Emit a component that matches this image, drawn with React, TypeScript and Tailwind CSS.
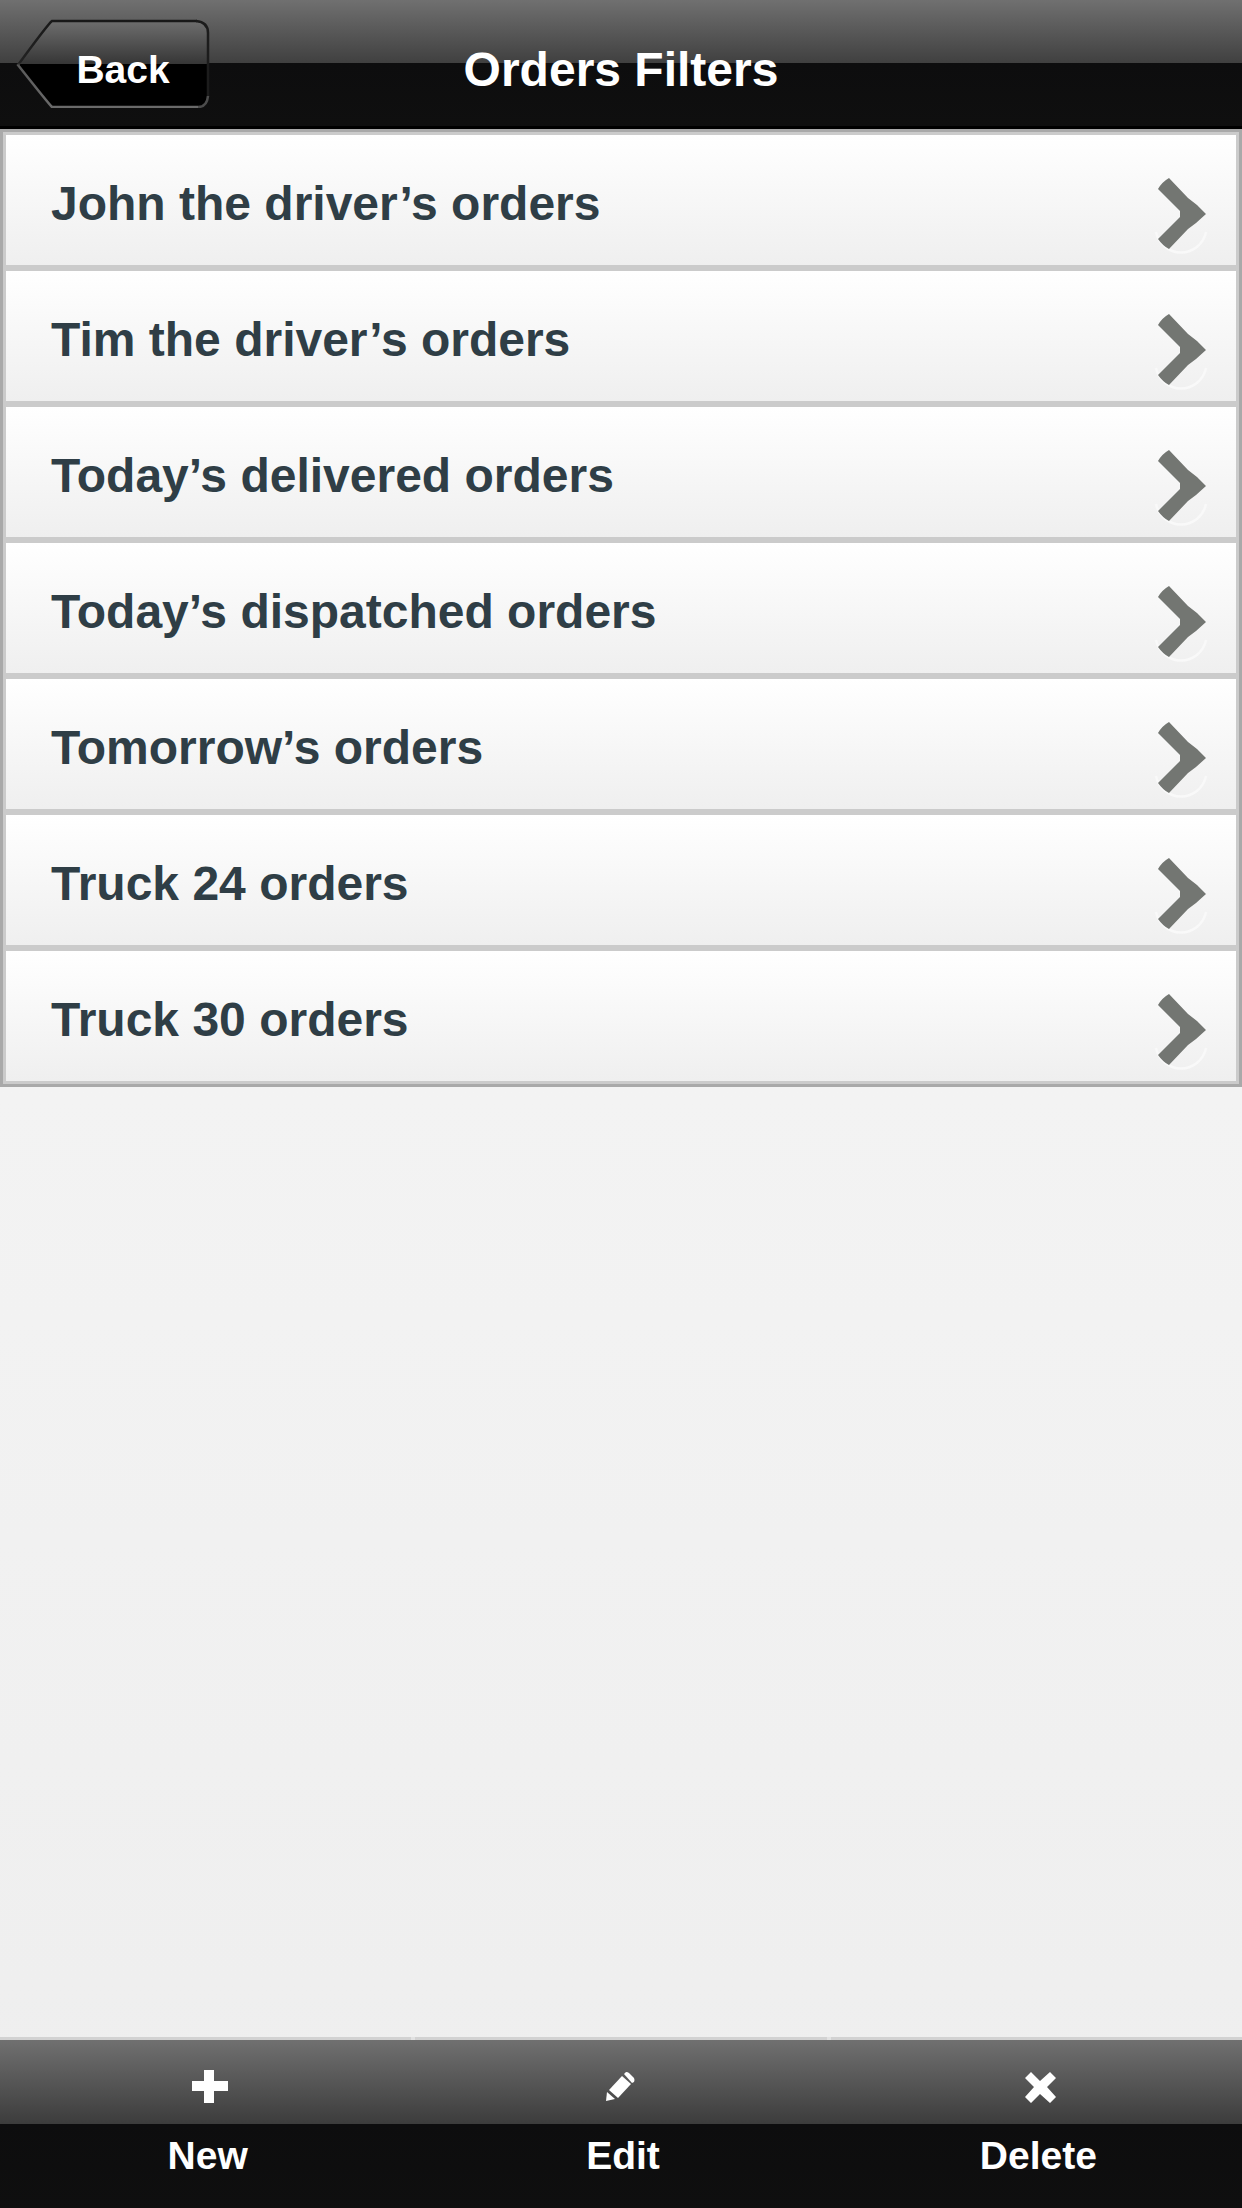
import { type ReactNode } from 'react';

const filters = [
    'John the driver’s orders',
    'Tim the driver’s orders',
    'Today’s delivered orders',
    'Today’s dispatched orders',
    'Tomorrow’s orders',
    'Truck 24 orders',
    'Truck 30 orders',
];

function BackButton() {
    return (
        <button className="relative ml-4 h-[90px] w-[194px] pl-5 text-[39px] leading-[44px] font-bold text-white">
            {/* Arrow shaped plate behind the label */}
            <svg viewBox="0 0 194 90" className="absolute inset-0 h-full w-full" aria-hidden="true">
                <defs>
                    <linearGradient id="plate" x1="0" y1="0" x2="0" y2="1">
                        <stop offset="0" stopColor="#6e6e6e" />
                        <stop offset="0.5" stopColor="#363636" />
                        <stop offset="0.5" stopColor="#000" />
                        <stop offset="1" stopColor="#000" />
                    </linearGradient>
                    <linearGradient id="plateEdge" gradientUnits="userSpaceOnUse" x1="0" y1="0" x2="0" y2="90">
                        <stop offset="0" stopColor="#181818" />
                        <stop offset="0.5" stopColor="#222" />
                        <stop offset="0.53" stopColor="#5a5a5a" />
                        <stop offset="1" stopColor="#6a6a6a" />
                    </linearGradient>
                </defs>
                <path d="M36 3H181Q192 4 192 15V79Q191 89 182 89H36Q32 85 2 47Q32 6 36 3Z" fill="url(#plate)" />
                <path d="M182 89H36Q32 85 2 47Q32 6 36 3H181" fill="none" stroke="url(#plateEdge)" strokeWidth="2.5" />
                <path d="M180 3Q192 4 192 15V79" fill="none" stroke="#1c1c1c" strokeWidth="2.5" />
                <path d="M192 78Q191 89 182 89" fill="none" stroke="#4c4c4c" strokeWidth="2.5" />
            </svg>
            <span className="relative block pt-3.5">Back</span>
        </button>
    );
}

function Chevron() {
    return (
        <svg viewBox="0 0 54 84" className="mt-7 h-[84px] w-[54px] shrink-0" aria-hidden="true">
            <path d="M2 60A25.5 25.5 0 0 0 52 60" fill="none" stroke="#f9f9f9" strokeWidth="2.5" />
            <path d="M4 17Q8 10 15 6L34 26L43 33L52 42L42 51L34 57L15 77Q9 74 4 67L26 45V39Z" fill="#737672" />
        </svg>
    );
}

function TabButton({ label, children }: { label: string; children: ReactNode }) {
    return (
        <button className="flex flex-col items-center border-t-3 border-[#d2d2d2] pl-1 text-[39px] leading-[44px] font-bold text-white">
            <span className="flex h-[84px] items-center justify-center pt-3">
                <svg viewBox="0 0 40 40" className="h-10 w-10" fill="#fff" aria-hidden="true">
                    {children}
                </svg>
            </span>
            <span className="h-[84px] pt-2.5">{label}</span>
        </button>
    );
}

export default function App() {
    return (
        <div className="flex min-h-screen flex-col bg-linear-to-b from-[#f8f8f8] to-[#eeeeee] font-['Liberation_Sans',Arial,sans-serif]">
            <header className="grid h-[129px] grid-cols-[1fr_auto_1fr] items-center border-b-3 border-black bg-[linear-gradient(#707070_0px,#404040_63px,#0d0d0e_63px,#0f0f0f_126px)]">
                <BackButton />
                <h1 className="pt-3.5 text-[48px] leading-[56px] font-bold text-white">Orders Filters</h1>
            </header>

            <main className="flex-1">
                <ul className="flex flex-col gap-1.5 border-3 border-[#a9a9a9] bg-[#cbcbcb] p-[3px]">
                    {filters.map((name) => (
                        <li key={name}>
                            <a
                                href="#"
                                className="flex h-[130px] items-center justify-between bg-linear-to-b from-white to-[#efefef] pr-7 pl-[45px] text-[48px] leading-[56px] font-bold text-[#2f3e46]"
                            >
                                <span className="pt-2">{name}</span>
                                <Chevron />
                            </a>
                        </li>
                    ))}
                </ul>
            </main>

            {/* The gaps show up as light notches in the top edge of the bar */}
            <nav className="grid grid-cols-3 gap-1 bg-[linear-gradient(#e2e2e2_3px,#707070_3px,#3c3c3c_87px,#0d0d0e_87px,#0f0f0f_100%)]">
                <TabButton label="New">
                    <path d="M16 2H26V13H40V23H26V35H16V23H4V13H16Z" />
                </TabButton>
                <TabButton label="Edit">
                    <path d="M21 6L23 4Q25 4 26 5L31 10Q32 12 31 14L29 15Z" />
                    <path d="M19 8L28 16L15 30L6 22Z" />
                    <path d="M4 24L12 31L3 33Z" />
                </TabButton>
                <TabButton label="Delete">
                    <path d="M13 4L22 13L32 4L38 10L29 19L38 29L32 35L22 26L13 35L7 29L16 19L7 10Z" />
                </TabButton>
            </nav>
        </div>
    );
}
